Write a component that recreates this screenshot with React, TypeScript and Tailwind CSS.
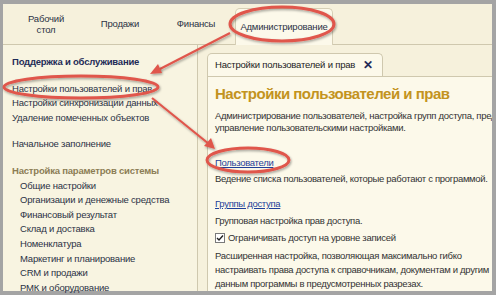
export default function App() {
  const leftTop = [
    "Настройки пользователей и прав",
    "Настройки синхронизации данных",
    "Удаление помеченных объектов",
  ]
  const sysItems = [
    "Общие настройки",
    "Организации и денежные средства",
    "Финансовый результат",
    "Склад и доставка",
    "Номенклатура",
    "Маркетинг и планирование",
    "CRM и продажи",
    "РМК и оборудование",
  ]

  return (
    <div className="relative w-[500px] h-[297px] bg-white overflow-hidden font-['Liberation_Sans',Arial,sans-serif] text-[9.5px] tracking-[-0.2px]">
      <div className="w-[496px] h-[295px] border-t-[4px] border-l-[3px] border-r-[4px] border-b-[4px] border-[#a4a4a4] bg-[#f6f1dc] flex flex-col">
        {/* top sections */}
        <div className="h-[41px] flex items-end border-b border-[#cfc8ae] text-[#2b3245] shrink-0">
          <div className="w-[80px] h-full flex flex-col items-center justify-center leading-[11px] pl-[6px]">
            <span>Рабочий</span>
            <span>стол</span>
          </div>
          <div className="w-[74px] h-full flex items-center justify-center">Продажи</div>
          <div className="w-[78px] h-full flex items-center justify-center">Финансы</div>
          <div className="w-[98px] h-[37px] flex items-center justify-center bg-[#fcf9ea] border border-b-0 border-[#d6cfb6] rounded-t-[5px] -mb-px">
            Администрирование
          </div>
        </div>

        <div className="flex flex-1 min-h-0">
          {/* left panel */}
          <div className="w-[195px] shrink-0 border-r border-[#cfc8ae] bg-[#f8f4e1] pt-[10px] pl-[9px] leading-[14.6px] text-[#2b3245] whitespace-nowrap">
            <div className="font-bold text-[#1f2b57] mb-[12px]">Поддержка и обслуживание</div>
            {leftTop.map((t) => (
              <div key={t}>{t}</div>
            ))}
            <div className="mt-[12px]">Начальное заполнение</div>
            <div className="mt-[12px] font-bold text-[#8c7d55]">Настройка параметров системы</div>
            {sysItems.map((t) => (
              <div key={t} className="pl-[8px]">
                {t}
              </div>
            ))}
          </div>

          {/* right panel */}
          <div className="flex-1 min-w-0 pl-[9px] pt-[8px] flex flex-col">
            <div className="w-[176px] h-[23px] flex items-center justify-between pl-[7px] pr-[9px] bg-[#fcf9ea] border border-b-0 border-[#cfc8ae] rounded-t-[5px] text-[#222] whitespace-nowrap">
              <span>Настройки пользователей и прав</span>
              <span className="text-[#1f2b57] font-bold text-[12px] leading-none">✕</span>
            </div>
            <div className="flex-1 bg-[#fcf9ea] border-t border-l border-[#cfc8ae] pl-[7px] pt-[6px] text-[#333] tracking-[-0.3px] overflow-hidden whitespace-nowrap">
              <div className="font-bold text-[15px] tracking-[-0.5px] leading-[22px] text-[#c39320]">
                Настройки пользователей и прав
              </div>
              <div className="mt-[5px] leading-[12px]">
                Администрирование пользователей, настройка групп доступа, предоставление
                <br />
                управление пользовательскими настройками.
              </div>
              <div className="mt-[22px] leading-[14px] text-[#1f3f99] underline">Пользователи</div>
              <div className="mt-[2px] leading-[14px]">Ведение списка пользователей, которые работают с программой.</div>
              <div className="mt-[11px] leading-[14px] text-[#1f3f99] underline">Группы доступа</div>
              <div className="mt-[3px] leading-[14px]">Групповая настройка прав доступа.</div>
              <div className="mt-[3px] flex items-center gap-[3px] leading-[14px]">
                <span className="w-[10px] h-[10px] border border-[#7a7a7a] bg-white flex items-center justify-center">
                  <svg width="8" height="8" viewBox="0 0 8 8">
                    <path d="M1 4 L3 6 L7 1.5" fill="none" stroke="#222" strokeWidth="1.4" />
                  </svg>
                </span>
                <span>Ограничивать доступ на уровне записей</span>
              </div>
              <div className="mt-[4px] leading-[14px]">
                Расширенная настройка, позволяющая максимально гибко
                <br />
                настраивать права доступа к справочникам, документам и другим
                <br />
                данным программы в предусмотренных разрезах.
              </div>
            </div>
          </div>
        </div>
      </div>

      {/* annotations */}
      <svg className="absolute inset-0 pointer-events-none" width="500" height="297" viewBox="0 0 500 297">
        <defs>
          <filter id="sh" x="-20%" y="-20%" width="140%" height="140%">
            <feDropShadow dx="1" dy="1.5" stdDeviation="1" floodColor="#000" floodOpacity="0.35" />
          </filter>
        </defs>
        <g filter="url(#sh)" fill="none" stroke="#e0564c" strokeWidth="3">
          <ellipse cx="282" cy="24" rx="52" ry="17" />
          <ellipse cx="81" cy="87" rx="77" ry="11" />
          <ellipse cx="248" cy="160" rx="41" ry="12" />
          <line x1="230" y1="33" x2="158" y2="70" strokeWidth="2.2" />
          <line x1="152" y1="98" x2="209" y2="144" strokeWidth="2.2" />
        </g>
        <g filter="url(#sh)" fill="#e0564c">
          <path d="M150 74 L158 64 L162 73 Z" />
          <path d="M215 149 L204 146 L211 138 Z" />
        </g>
      </svg>
    </div>
  )
}
